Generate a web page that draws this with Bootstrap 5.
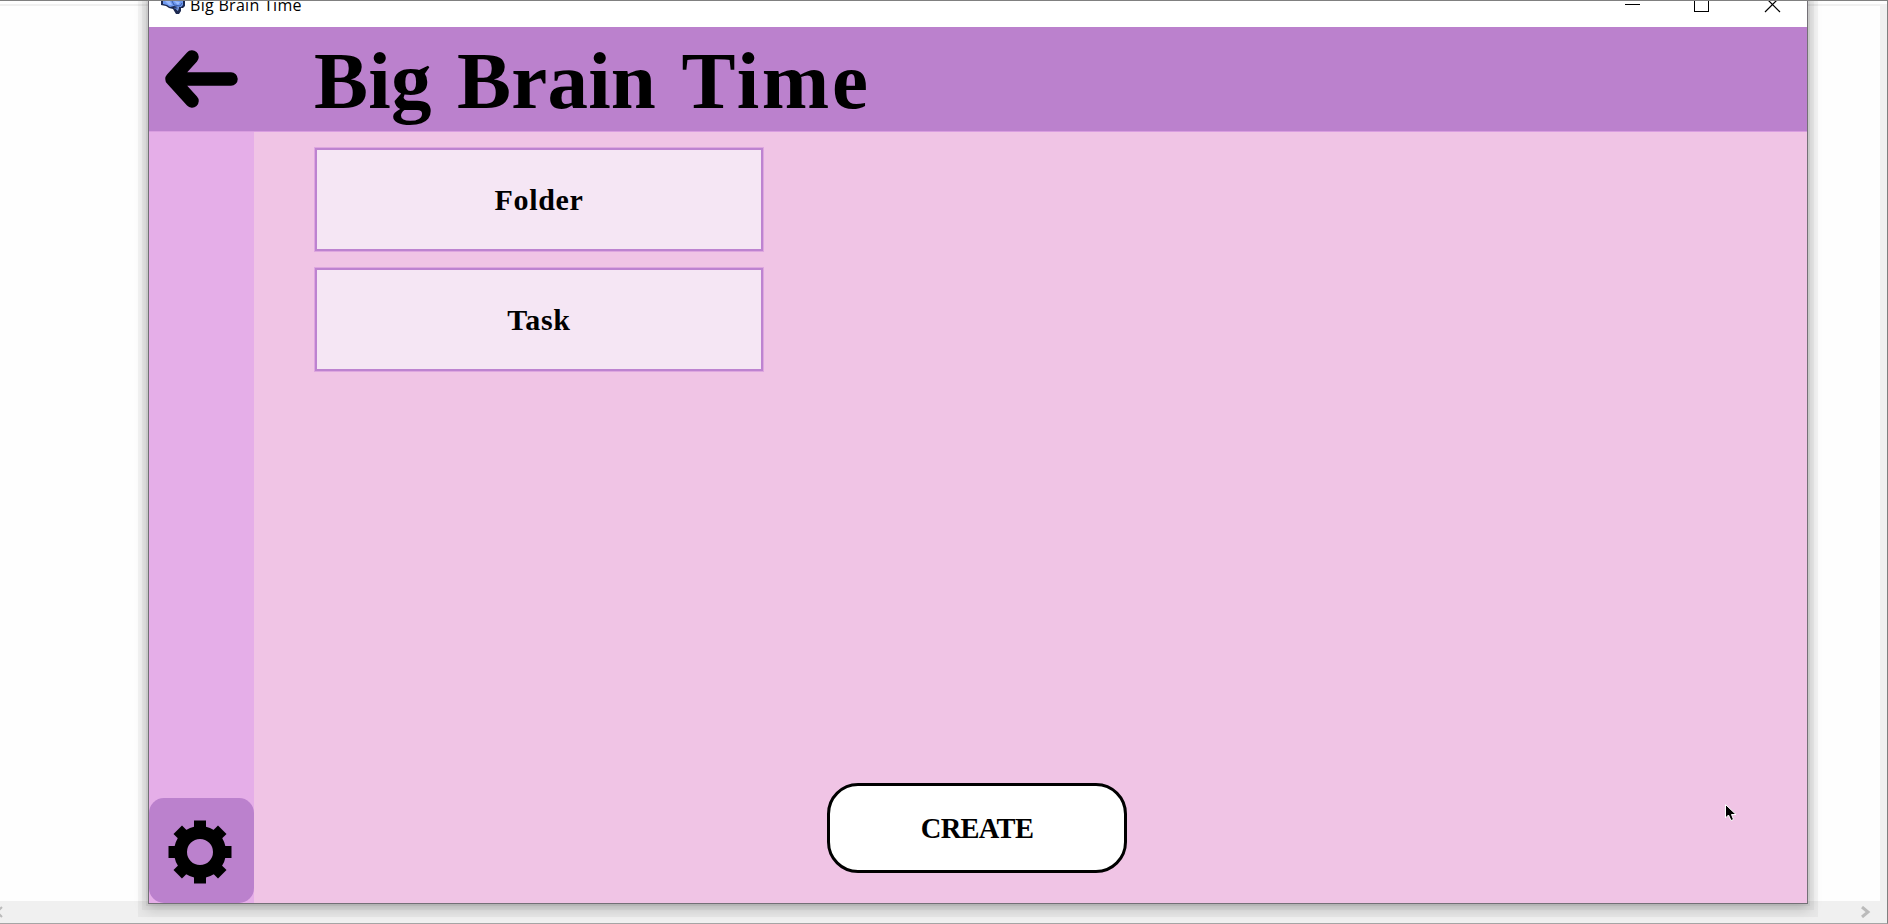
<!DOCTYPE html>
<html lang="en">
<head>
<meta charset="utf-8">
<title>Big Brain Time</title>
<link href="https://cdn.jsdelivr.net/npm/bootstrap@5.3.0/dist/css/bootstrap.min.css" rel="stylesheet">
<style>
body{width:1888px;height:924px;background:#fefefe;overflow:hidden;position:relative;border-top:1px solid #808080;border-right:1px solid #808080;border-bottom:1px solid #a5a5a5;color:#000}
.desk-top{margin-top:3px;height:2px;background:#f0f0f0}
.v-scroll{width:7px;background:#f0f0f0}
.h-scroll{height:22px;background:#f0f0f0}
.app-window{position:absolute;left:148px;top:-6px;width:1660px;height:909px;border:1px solid #737076;box-shadow:0 0 0 2px #0000000a,0 0 0 6px #00000008,0 3px 0 10px #00000009,0 3px 12px 1px #00000038}
.title-bar{height:31px;background:#fff;padding-left:12px;font:16px/20px "Open Sans",sans-serif}
.title-bar .caption-text{position:relative;top:-1px;letter-spacing:.3px}
.app-header{height:105px;background:#bb81cd;border-bottom:1px solid #d99de0;font-family:"Liberation Serif",serif}
.app-title{font-size:81px;line-height:1;font-weight:700;letter-spacing:.2px;word-spacing:5px;margin-left:74px;padding-top:4px}
.app-title .last-word{letter-spacing:2.6px}
.side-rail{width:105px;background:#e5aee8}
.settings{width:105px;height:105px;border-radius:15px;background:#bb81cd}
.main-pane{background:#f0c4e5;padding:15px 0 30px 60px;font-family:"Liberation Serif",serif}
.choice{width:450px;height:105px;border:3px solid #bd83d0;outline:1px solid #dea6df;outline-offset:-1px;border-radius:0;background:#f5e6f4!important;font-size:30px;font-weight:700;letter-spacing:.7px;color:#000}
.create{width:300px;height:90px;border:3px solid #000;border-radius:31px;background:#fff;font-size:28.5px;font-weight:700;letter-spacing:-.7px;margin-left:513px;padding-top:8px;color:#000}
.pointer{position:absolute;left:1725px;top:803px}
</style>
</head>
<body>
<div class="d-flex flex-column h-100">
  <div class="desk-top"></div>
  <div class="d-flex flex-grow-1 justify-content-end"><div class="v-scroll"></div></div>
  <div class="h-scroll d-flex justify-content-between align-items-center">
    <svg width="3" height="12"><path d="M2 1L-3 6L2 11" fill="none" stroke="#bbb" stroke-width="2"/></svg>
    <svg width="12" height="12" style="margin-right:15px"><path d="M2 1L8 6L2 11" fill="none" stroke="#bbb" stroke-width="3"/></svg>
  </div>
</div>
<div class="app-window d-flex flex-column">
  <div class="title-bar d-flex flex-shrink-0 align-items-start">
    <svg width="25" height="20" viewBox="0 0 25 20"><path d="M0 0H24V10L22 12H20V15L18 18H15L12 13L8 12L5 10L0 9Z" fill="#1c2950"/><path d="M2 3H22V9L20 11H17L13 10L9 11L6 9L2 8Z" fill="#6e99ef"/><path d="M4 5H9L11 9H8M13 5L19 6L17 9M14 12L18 11L17 15Z" fill="#9bbcff"/><path d="M11 5L13 9L19 10L21 7M13 12L17 13" fill="none" stroke="#3a5cab"/></svg>
    <span class="caption-text ms-1">Big Brain Time</span>
    <svg class="ms-auto me-4" width="166" height="20" viewBox="0 0 166 20" fill="none" stroke="#000" shape-rendering="crispEdges"><path d="M8 8.500H23M77.500 2V15.500H91.500V2"/><path d="M148 1L163 16M163 1L148 16" shape-rendering="auto" stroke-width="1.200"/></svg>
  </div>
  <header class="app-header d-flex flex-shrink-0 align-items-center">
    <svg class="ms-3 flex-shrink-0" width="75" height="60" viewBox="0 0 75 60"><path d="M27 8L7 30L27 52M7 30H66" fill="none" stroke="#000" stroke-width="13.500" stroke-linecap="round" stroke-linejoin="round"/><path d="M8 30L22 16V44Z"/></svg>
    <h1 class="app-title mb-0">Big Brain <span class="last-word">Time</span></h1>
  </header>
  <div class="d-flex flex-grow-1">
    <aside class="side-rail d-flex flex-column justify-content-end">
      <div class="settings d-flex align-items-center justify-content-center">
        <svg width="64" height="64" viewBox="-32 -32 64 64" style="transform:translate(-2px,1px)"><defs><path id="tooth" d="M-6-31.500H6V-20H-6Z"/><path id="cog" d="M-6-31.500H6V-20H-6Z"/></defs><circle r="19.500" fill="none" stroke="#000" stroke-width="13"/><use href="#tooth"/><use href="#tooth" transform="rotate(90)"/><use href="#tooth" transform="rotate(180)"/><use href="#tooth" transform="rotate(270)"/><use href="#cog" transform="rotate(45)"/><use href="#cog" transform="rotate(135)"/><use href="#cog" transform="rotate(225)"/><use href="#cog" transform="rotate(315)"/></svg>
      </div>
    </aside>
    <main class="main-pane flex-grow-1 d-flex flex-column align-items-start">
      <div class="d-grid" style="gap:15px"><button class="choice btn">Folder</button><button class="choice btn">Task</button></div>
      <button class="create btn mt-auto">CREATE</button>
    </main>
  </div>
</div>
<svg class="pointer" width="12" height="18" viewBox="0 0 12 18"><path d="M.5.5V14L3.500 11L6 16.500L8.500 15.500L6.500 10.500H11Z" fill="#000" stroke="#fff"/></svg>
<script src="https://cdn.jsdelivr.net/npm/bootstrap@5.3.0/dist/js/bootstrap.bundle.min.js"></script>
</body>
</html>
